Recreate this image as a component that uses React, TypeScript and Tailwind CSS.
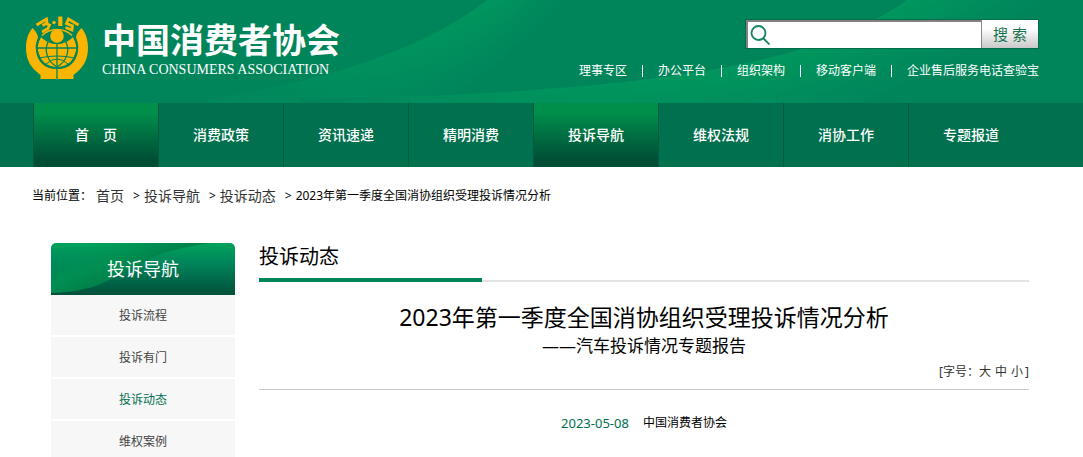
const topLinks = ['理事专区', '办公平台', '组织架构', '移动客户端', '企业售后服务电话查验宝'];

const navItems = [
  { label: '首　页', active: true },
  { label: '消费政策', active: false },
  { label: '资讯速递', active: false },
  { label: '精明消费', active: false },
  { label: '投诉导航', active: true },
  { label: '维权法规', active: false },
  { label: '消协工作', active: false },
  { label: '专题报道', active: false },
];

const sideItems = [
  { label: '投诉流程', current: false },
  { label: '投诉有门', current: false },
  { label: '投诉动态', current: true },
  { label: '维权案例', current: false },
];

function Emblem() {
  return (
    <svg viewBox="0 0 62 64" className="h-16 w-[62px] shrink-0" aria-hidden="true">
      {/* hands */}
      <path
        fill="#f9b500"
        d="M6.5 12 C1.500 18 0 25 0 32 C0 44 5 52 14.500 59 V63 H47.500 V59 C57 52 62 44 62 32 C62 25 60.500 18 55.500 12 C52.500 15 50.500 18 50 21 C50.500 24 53 28 52 34 C51 46 43 53 31 53 C19 53 11 46 10 34 C9 28 11.500 24 12 21 C11.500 18 9.500 15 6.500 12 Z"
      />
      {/* globe */}
      <path fill="#f9b500" d="M15 21 C12 26 11 31 12 35 C14 46 22 51 31 51 C40 51 48 46 50 35 C51 31 50 26 47 21 C43 25 38 28 31 28 C24 28 19 25 15 21 Z" />
      <g fill="none" stroke="#00855b" strokeWidth="1.300">
        <path d="M31 27 V63" />
        <path d="M11.500 32 H50.500" />
        <path d="M13 42 Q22 40 31 40 Q40 40 49 42" strokeWidth="1" />
        <path d="M22 26 C18 35 21 45 31 51" />
        <path d="M40 26 C44 35 41 45 31 51" />
        <path d="M20 48 Q31 38 42 48" strokeWidth="1" />
        <path d="M14 21 C10.500 27 10 33 12 38 C15 47 22 52 31 52 C40 52 47 47 50 38 C52 33 51.500 27 48 21" strokeWidth="1.800" />
      </g>
      {/* eye */}
      <path fill="#00855b" d="M15 19 Q22 11 31 11 Q40 11 47 19 Q40 28 31 28 Q22 28 15 19 Z" />
      <path fill="none" stroke="#f9b500" strokeWidth="1.500" d="M16 19.500 Q22 13.500 31 13.500 Q40 13.500 46 19.500" />
      <circle cx="31" cy="20" r="6.800" fill="#f9b500" />
      {/* numerals across the top */}
      <g fill="none" stroke="#f9b500" strokeWidth="2.800">
        <path d="M10.500 9 L20.500 3 L21 7 L16.500 9.500 M20 7.500 L23.500 9 L22 12.500 L16 16" />
        <path d="M34.300 0.500 V10" strokeWidth="4.200" />
        <path d="M52.500 9 L42.500 3 L40.500 7.500 L46.500 10 L46 14 L39.500 11.500" />
      </g>
      <circle cx="28" cy="6.500" r="1.700" fill="#f9b500" />
    </svg>
  );
}

function HeaderWaves() {
  return (
    <svg viewBox="0 0 1083 103" preserveAspectRatio="none" className="absolute inset-0 size-full" aria-hidden="true">
      <defs>
        <radialGradient id="waveA" gradientUnits="userSpaceOnUse" cx="230" cy="-290" r="445">
          <stop offset="0.850" stopColor="#00995f" />
          <stop offset="1" stopColor="#00855b" />
        </radialGradient>
        <linearGradient id="fadeLeft" gradientUnits="userSpaceOnUse" x1="200" y1="0" x2="500" y2="0">
          <stop offset="0" stopColor="#00855b" />
          <stop offset="1" stopColor="#00855b" stopOpacity="0" />
        </linearGradient>
        <radialGradient id="waveB" gradientUnits="userSpaceOnUse" cx="600" cy="-560" r="715">
          <stop offset="0.890" stopColor="#00975e" />
          <stop offset="1" stopColor="#00855b" />
        </radialGradient>
      </defs>
      <path fill="url(#waveA)" d="M487 0 Q400 70 190 103 H1083 V0 Z" />
      <path fill="url(#fadeLeft)" d="M190 0 H500 V103 H190 Z" />
      <path fill="url(#waveB)" d="M907 0 C820 62 660 94 300 99 V103 H1083 V0 Z" />
    </svg>
  );
}

function SearchForm() {
  return (
    <form className="flex h-[30px] w-[294px] border border-[#006c49]" onSubmit={(e) => e.preventDefault()}>
      <div className="flex min-w-0 flex-1 items-center border-t-2 border-l-2 border-[#818181] bg-white pl-0.5">
        <svg viewBox="0 0 20 20" className="size-5 shrink-0" fill="none" stroke="#138461" strokeWidth="1.800" aria-hidden="true">
          <circle cx="8.500" cy="8" r="7" />
          <path d="M13 13 L19.500 19.500" />
        </svg>
        <input type="text" aria-label="站内搜索" className="h-full w-full min-w-0 px-1 text-sm text-black outline-none" />
      </div>
      <button
        type="submit"
        className="w-[57px] border-l border-[#888] bg-linear-to-b from-white from-30% to-[#c9c9c9] text-[15px] text-[#1b7350]"
      >
        搜 索
      </button>
    </form>
  );
}

export default function App() {
  return (
    <div className="bg-white font-['Noto_Sans','Noto_Sans_CJK_SC',sans-serif] text-xs text-black">
      <header>
        <div className="relative bg-[#00855b]">
          <HeaderWaves />
          <div className="relative flex h-[103px] items-start justify-between pr-11 pl-[26px]">
            <a href="#" className="flex items-start gap-3.5 pt-4 text-white">
              <Emblem />
              <span className="flex flex-col">
                <span className="text-[34px] leading-[48px] font-bold whitespace-nowrap">中国消费者协会</span>
                <span className="font-['Liberation_Serif',serif] text-sm leading-3 whitespace-nowrap">
                  CHINA CONSUMERS ASSOCIATION
                </span>
              </span>
            </a>
            <div className="flex flex-col items-end gap-3 pt-[19px]">
              <SearchForm />
              <ul className="flex items-center pt-px text-xs leading-[18px] text-white">
                {topLinks.map((label, i) => (
                  <li key={label} className="flex items-center">
                    {i > 0 && <span className="mx-[15px] h-3 w-px bg-white" />}
                    <a href="#" className="whitespace-nowrap">{label}</a>
                  </li>
                ))}
              </ul>
            </div>
          </div>
        </div>
        <nav className="bg-[#00704e] px-[33px]">
          <ul className="flex">
            {navItems.map((item) => (
              <li key={item.label} className="w-[125px] border-l border-[#005c3e]">
                <a
                  href="#"
                  className={
                    item.active
                      ? 'flex h-16 items-center justify-center bg-linear-to-b from-[#008f4b] from-15% to-[#004d35] to-90% text-sm font-medium text-white'
                      : 'flex h-16 items-center justify-center text-sm font-medium text-white'
                  }
                >
                  {item.label}
                </a>
              </li>
            ))}
          </ul>
        </nav>
      </header>

      <div className="flex items-center px-8 pt-5 leading-[18px]">
        <span>当前位置：</span>
        <a href="#" className="ml-1 text-sm leading-[18px] text-[#333]">首页</a>
        <span className="mr-1 ml-[9px]">&gt;</span>
        <a href="#" className="text-sm leading-[18px] text-[#333]">投诉导航</a>
        <span className="mr-1 ml-[9px]">&gt;</span>
        <a href="#" className="text-sm leading-[18px] text-[#333]">投诉动态</a>
        <span className="mr-1 ml-[9px]">&gt;</span>
        <span>2023年第一季度全国消协组织受理投诉情况分析</span>
      </div>

      <div className="flex gap-6 pt-[38px] pr-[54px] pl-[51px]">
        <aside className="w-[184px] shrink-0">
          <h2 className="relative flex h-[52px] items-center justify-center overflow-hidden rounded-t-[5px] bg-linear-to-b from-[#00a35b] via-[#00845a] via-40% to-[#00503a] text-lg text-white">
            <svg viewBox="0 0 184 52" preserveAspectRatio="none" className="absolute inset-0 size-full" aria-hidden="true">
              <defs>
                <linearGradient id="sideWave" gradientUnits="userSpaceOnUse" x1="30" y1="0" x2="50" y2="50">
                  <stop offset="0" stopColor="#009c5a" stopOpacity="0" />
                  <stop offset="0.500" stopColor="#008f52" />
                  <stop offset="1" stopColor="#007a45" />
                </linearGradient>
              </defs>
              <path fill="url(#sideWave)" d="M0 0 H160 Q122 5 100 15 L62 35 Q38 49 0 50 Z" />
            </svg>
            <span className="relative">投诉导航</span>
          </h2>
          <ul className="flex flex-col gap-0.5">
            {sideItems.map((item) => (
              <li key={item.label}>
                <a
                  href="#"
                  className={
                    item.current
                      ? 'flex h-10 items-center justify-center bg-[#f7f7f7] pt-0.5 text-[#00704e]'
                      : 'flex h-10 items-center justify-center bg-[#f7f7f7] pt-0.5 text-[#444]'
                  }
                >
                  {item.label}
                </a>
              </li>
            ))}
          </ul>
        </aside>

        <main className="min-w-0 flex-1">
          <h2 className="text-xl leading-7">投诉动态</h2>
          <div className="mt-[7px] flex items-end">
            <span className="h-1 w-[29%] bg-[#00855b]" />
            <span className="h-0.5 flex-1 bg-[#e3e3e3]" />
          </div>
          <h1 className="mt-[19px] text-center text-[23px] leading-8">2023年第一季度全国消协组织受理投诉情况分析</h1>
          <p className="text-center text-[17px] leading-[26px]">——汽车投诉情况专题报告</p>
          <div className="mt-1 flex justify-end border-b border-[#ccc] pb-2 leading-[18px] text-[#333]">
            <span>[字号：</span>
            <button type="button" className="mr-1">大</button>
            <button type="button" className="mr-1">中</button>
            <button type="button">小</button>
            <span className="ml-0.5">]</span>
          </div>
          <p className="mt-6 flex items-center justify-center gap-3.5 leading-[18px]">
            <time className="text-[13px] leading-[18px] text-[#00704e]">2023-05-08</time>
            <span>中国消费者协会</span>
          </p>
        </main>
      </div>
    </div>
  );
}
